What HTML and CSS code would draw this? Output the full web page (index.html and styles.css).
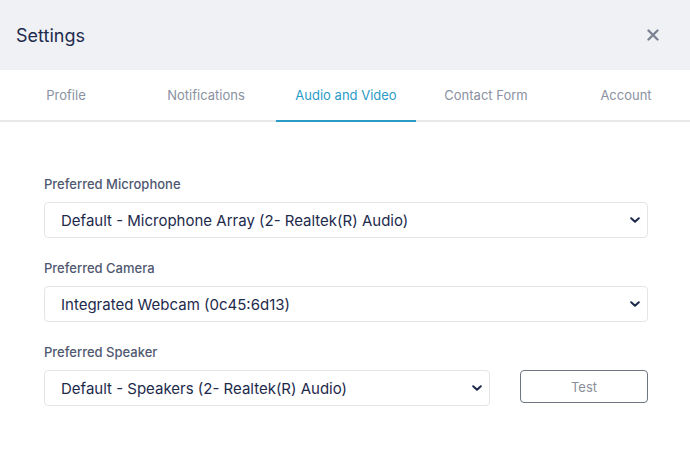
FILE: index.html
```html
<!DOCTYPE html>
<html>
<head>
<meta charset="utf-8">
<link rel="stylesheet" href="styles.css">
</head>
<body>
<div class="modal">
  <div class="header">
    <div class="title">Settings</div>
    <svg class="close" width="12" height="12" viewBox="0 0 12 12"><path d="M1.5 1.5L10.5 10.5M10.5 1.5L1.5 10.5" stroke="#7c8494" stroke-width="2.4" stroke-linecap="round"/></svg>
  </div>
  <div class="tabs">
    <div class="tab">Profile</div>
    <div class="tab">Notifications</div>
    <div class="tab active">Audio and Video</div>
    <div class="tab">Contact Form</div>
    <div class="tab">Account</div>
  </div>
  <div class="content">
    <div class="field">
      <div class="label">Preferred Microphone</div>
      <div class="select"><span>Default - Microphone Array (2- Realtek(R) Audio)</span>
        <svg class="chev" width="10" height="6" viewBox="0 0 10 6"><path d="M1.2 1.2L5 4.8L8.8 1.2" fill="none" stroke="#1d2a4c" stroke-width="2" stroke-linecap="round" stroke-linejoin="round"/></svg></div>
    </div>
    <div class="field">
      <div class="label">Preferred Camera</div>
      <div class="select"><span>Integrated Webcam (0c45:6d13)</span>
        <svg class="chev" width="10" height="6" viewBox="0 0 10 6"><path d="M1.2 1.2L5 4.8L8.8 1.2" fill="none" stroke="#1d2a4c" stroke-width="2" stroke-linecap="round" stroke-linejoin="round"/></svg></div>
    </div>
    <div class="field">
      <div class="label">Preferred Speaker</div>
      <div class="row">
        <div class="select speaker"><span>Default - Speakers (2- Realtek(R) Audio)</span>
          <svg class="chev" width="10" height="6" viewBox="0 0 10 6"><path d="M1.2 1.2L5 4.8L8.8 1.2" fill="none" stroke="#1d2a4c" stroke-width="2" stroke-linecap="round" stroke-linejoin="round"/></svg></div>
        <button class="test">Test</button>
      </div>
    </div>
  </div>
</div>
</body>
</html>
```
FILE: styles.css
```css
* { box-sizing: border-box; }
html, body { margin: 0; padding: 0; background: #fff; }
body { font-family: Inter, "Noto Sans", sans-serif; width: 690px; height: 465px; overflow: hidden; }
.header {
  height: 70px;
  background: #eff1f4;
  display: flex;
  align-items: center;
  justify-content: space-between;
  padding: 0 31px 0 16px;
}
.title { font-size: 18px; color: #1d2a4c; font-weight: 400; }
.close { display: block; }
.tabs {
  height: 52px;
  display: flex;
  border-bottom: 2px solid #e7e8ea;
  margin-left: -4px;
}
.tab {
  width: 140px;
  flex: 0 0 140px;
  text-align: center;
  font-size: 13px;
  color: #8a91a1;
  line-height: 51px;
  border-bottom: 2px solid transparent;
  margin-bottom: -2px;
}
.tab.active { color: #2b9bc6; border-bottom-color: #2b9bc6; }
.content { padding: 53px 42px 0 44px; }
.field { margin-bottom: 21px; }
.label { font-size: 13px; font-weight: 500; color: #505870; line-height: 18px; margin-bottom: 9px; }
.select {
  height: 36px;
  border: 1px solid #e3e5e9;
  border-radius: 4px;
  display: flex;
  align-items: center;
  justify-content: space-between;
  padding: 0 7px 0 16px;
  font-size: 15px;
  color: #1d2a4c;
}
.chev { display: block; }
.row { display: flex; align-items: flex-start; gap: 30px; }
.speaker { width: 446px; }
.test {
  width: 128px;
  height: 33px;
  border: 1px solid #6f7682;
  border-radius: 4px;
  background: #fff;
  font-family: Inter, "Noto Sans", sans-serif;
  font-size: 13px;
  color: #8b909a;
  padding: 0;
}
```
